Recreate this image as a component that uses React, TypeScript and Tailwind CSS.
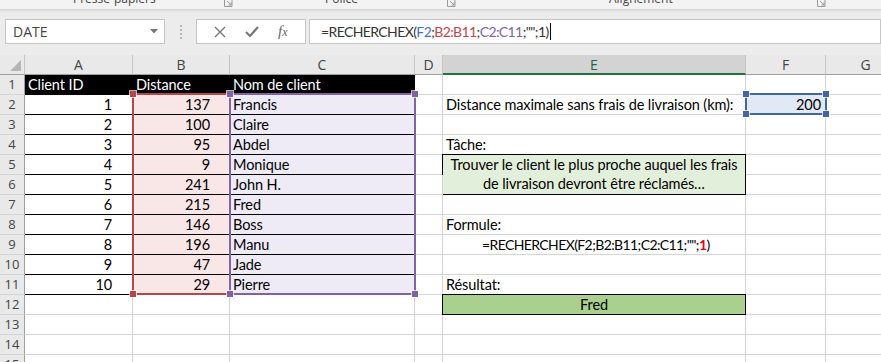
import React from "react";

const CELL_FONT = "font-['Lato','Open_Sans',sans-serif]";
const UI_FONT = "font-['Open_Sans','Noto_Sans',sans-serif]";

const GRID = "border-r border-b border-[#d4d4d4]";

type Cell = { text?: React.ReactNode; cls?: string };

// rows 1..15, columns A..G
const buildRow = (r: number): (Cell | null)[] => {
  const ids = [1, 2, 3, 4, 5, 6, 7, 8, 9, 10];
  const dist = [137, 100, 95, 9, 241, 215, 146, 196, 47, 29];
  const names = ["Francis", "Claire", "Abdel", "Monique", "John H.", "Fred", "Boss", "Manu", "Jade", "Pierre"];
  const cells: (Cell | null)[] = Array.from({ length: 7 }, () => ({}));

  if (r === 1) {
    cells[0] = { text: "Client ID", cls: "bg-black text-white border-r border-b border-black pl-[3px]" };
    cells[1] = { text: "Distance", cls: "bg-black text-white border-r border-b border-black pl-[3px]" };
    cells[2] = { text: "Nom de client", cls: "bg-black text-white border-r border-b border-black pl-[3px]" };
  }
  if (r >= 2 && r <= 11) {
    const i = r - 2;
    cells[0] = { text: ids[i], cls: "border-r border-b border-r-[#d4d4d4] border-b-black text-right pr-[20px]" };
    cells[1] = { text: dist[i], cls: "bg-[#f9e6e7] border-r border-b border-r-[#d4d4d4] border-b-black text-right pr-[19px]" };
    cells[2] = { text: names[i], cls: "bg-[#eeebf6] border-r border-b border-r-[#d4d4d4] border-b-black pl-[3px]" };
  }
  if (r === 2) {
    cells[4] = { text: "Distance maximale sans frais de livraison (km):", cls: `${GRID} pl-[3px]` };
    cells[5] = { text: "200", cls: `${GRID} bg-[#e1e9f6] text-right pr-[4px]` };
  }
  if (r === 4) cells[4] = { text: "Tâche:", cls: `${GRID} pl-[3px]` };
  if (r === 5)
    cells[4] = {
      text: (
        <>
          Trouver le client le plus proche auquel les frais
          <br />
          de livraison devront être réclamés…
        </>
      ),
      cls: "row-span-2 bg-[#e2efda] border border-black text-center -ml-px -mt-px",
    };
  if (r === 6) cells[4] = null;
  if (r === 8) cells[4] = { text: "Formule:", cls: `${GRID} pl-[3px]` };
  if (r === 9)
    cells[4] = {
      text: (
        <span className="text-[14px] tracking-[-0.6px]">
          =RECHERCHEX(F2;B2:B11;C2:C11;"";<span className="font-bold text-[#e0001b]">1</span>)
        </span>
      ),
      cls: `${GRID} pl-[39px]`,
    };
  if (r === 11) cells[4] = { text: "Résultat:", cls: `${GRID} pl-[3px]` };
  if (r === 12) cells[4] = { text: "Fred", cls: "bg-[#a9d08e] border border-black text-center -ml-px -mt-px" };
  return cells;
};

const Handle = ({ x, y, color }: { x: number; y: number; color: string }) => (
  <div
    className={`absolute w-[6px] h-[6px] ${color} outline outline-1 outline-white/70`}
    style={{ left: x - 3, top: y - 3 }}
  />
);

const Launcher = ({ x }: { x: number }) => (
  <svg className="absolute top-0" style={{ left: x }} width="9" height="7" viewBox="0 0 9 7" fill="none" stroke="#9a9a9a" strokeWidth="1">
    <path d="M0.5 0v6.5h7.5V0" />
    <path d="M3 1l4 4M7 2.5V5H4.5" />
  </svg>
);

export default function App() {
  const headers = ["A", "B", "C", "D", "E", "F", "G"];
  const rows = Array.from({ length: 15 }, (_, i) => i + 1);

  return (
    <div className={`relative w-[881px] h-[362px] overflow-hidden bg-[#ececec] ${CELL_FONT}`}>
      {/* ribbon bottom */}
      <div className={`relative h-[9px] bg-[#f3f3f3] overflow-hidden text-[12px] text-[#444] ${UI_FONT}`}>
        <span className="absolute top-[-10px] left-[73px]">Presse-papiers</span>
        <span className="absolute top-[-10px] left-[325px]">Police</span>
        <span className="absolute top-[-10px] left-[609px]">Alignement</span>
        <Launcher x={224} />
        <Launcher x={447} />
        <Launcher x={817} />
      </div>
      <div className="h-[3px] bg-gradient-to-b from-[#d2d2d2] to-[#ececec]" />

      {/* formula bar */}
      <div className="flex items-center h-[43px] pl-[5px] pb-[4px]">
        <div className={`flex items-center w-[160px] h-[25px] bg-white border border-[#c6c6c6] pl-[7px] pr-[6px] text-[14px] text-[#444] ${UI_FONT}`}>
          <span className="flex-1">DATE</span>
          <svg width="8" height="5" viewBox="0 0 8 5">
            <path d="M0 0h8L4 4.5z" fill="#777" />
          </svg>
        </div>
        <div className="flex flex-col gap-[2px] w-[31px] items-center">
          <span className="w-[2px] h-[2px] bg-[#b8b8b8]" />
          <span className="w-[2px] h-[2px] bg-[#b8b8b8]" />
          <span className="w-[2px] h-[2px] bg-[#b8b8b8]" />
          <span className="w-[2px] h-[2px] bg-[#b8b8b8]" />
        </div>
        <div className="flex items-center justify-around w-[110px] h-[25px] bg-white border border-[#c6c6c6] px-[8px]">
          <svg width="12" height="12" viewBox="0 0 12 12" stroke="#777" strokeWidth="1.4">
            <path d="M1 1l10 10M11 1L1 11" />
          </svg>
          <svg width="14" height="12" viewBox="0 0 14 12" fill="none" stroke="#777" strokeWidth="2.2">
            <path d="M1 6l4 4 8-9" />
          </svg>
          <span className="font-['Liberation_Serif',serif] italic text-[15px] text-[#666] leading-none">
            f<span className="text-[12px]">x</span>
          </span>
        </div>
        <div className="flex items-center flex-1 h-[25px] ml-[3px] bg-white border border-[#c6c6c6] pl-[11px] text-[14px] tracking-[-0.6px] text-[#333]">
          <span>=RECHERCHEX(</span>
          <span className="text-[#4472c4]">F2</span>
          <span>;</span>
          <span className="text-[#b9474f]">B2:B11</span>
          <span>;</span>
          <span className="text-[#8064a2]">C2:C11</span>
          <span>;"";1)</span>
          <span className="w-px h-[17px] bg-black ml-px" />
        </div>
      </div>

      {/* sheet */}
      <div className="relative bg-white">
        <div className="grid grid-cols-[25px_108px_97px_185px_28px_303px_80px_80px] auto-rows-[20px] w-[906px] text-[14.5px] tracking-[-0.1px] leading-[19px] text-black">
          {/* header row */}
          <div className="relative bg-[#e9e9e9] border-r border-b border-r-[#c6c6c6] border-b-[#9e9e9e]">
            <svg className="absolute right-[3px] bottom-[3px]" width="11" height="11" viewBox="0 0 11 11">
              <path d="M11 0v11H0z" fill="#b5b5b5" />
            </svg>
          </div>
          {headers.map((h) => (
            <div
              key={h}
              className={`flex items-center justify-center text-[14px] tracking-normal ${UI_FONT} border-r ${
                h === "E"
                  ? "bg-[#d3d3d3] text-[#2b5f3e] border-b-2 border-b-[#217346] border-r-[#c6c6c6]"
                  : "bg-[#e9e9e9] text-[#444] border-b border-r-[#c6c6c6] border-b-[#9e9e9e]"
              }`}
            >
              {h}
            </div>
          ))}

          {rows.map((r) => (
            <React.Fragment key={r}>
              <div
                className={`flex items-center justify-center bg-[#e9e9e9] text-[13px] tracking-normal text-[#444] ${UI_FONT} border-r border-b border-r-[#9e9e9e] border-b-[#d4d4d4]`}
              >
                {r}
              </div>
              {buildRow(r).map((c, i) =>
                c === null ? null : (
                  <div key={i} className={`overflow-visible whitespace-nowrap ${c.cls ?? GRID}`}>
                    {c.text}
                  </div>
                )
              )}
            </React.Fragment>
          ))}
        </div>

        {/* range highlights from the formula being edited */}
        <div className="absolute left-[132px] top-[38px] w-[99px] h-[202px] border-2 border-[#b1484e]" />
        <div className="absolute left-[229px] top-[38px] w-[187px] h-[202px] border-2 border-[#8064a2]" />
        <div className="absolute left-[745px] top-[38px] w-[82px] h-[22px] border-2 border-[#41669e]" />
        <Handle x={133} y={39} color="bg-[#b1484e]" />
        <Handle x={133} y={239} color="bg-[#b1484e]" />
        <Handle x={230} y={39} color="bg-[#8064a2]" />
        <Handle x={415} y={39} color="bg-[#8064a2]" />
        <Handle x={230} y={239} color="bg-[#8064a2]" />
        <Handle x={415} y={239} color="bg-[#8064a2]" />
        <Handle x={746} y={39} color="bg-[#41669e]" />
        <Handle x={826} y={39} color="bg-[#41669e]" />
        <Handle x={746} y={59} color="bg-[#41669e]" />
        <Handle x={826} y={59} color="bg-[#41669e]" />
      </div>
    </div>
  );
}
